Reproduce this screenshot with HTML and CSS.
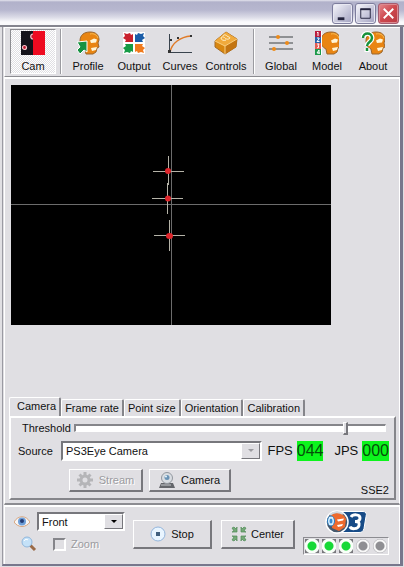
FILE: index.html
```html
<!DOCTYPE html>
<html lang="en">
<head>
<meta charset="utf-8">
<meta name="viewport" content="width=device-width, initial-scale=1">
<title>Head tracker</title>
<link rel="stylesheet" href="styles.css">
</head>
<body>
<svg class="defs" aria-hidden="true">
  <symbol id="head" viewBox="0 0 24 24">
    <path d="M3 10C3 4 7 1 13 1c6 0 9 3 9 8l-1 3 1 4-2 1-1 4-3 2H9l-1-5C4 16 3 13 3 10z" fill="#e98512" stroke="#9b662c"/>
    <path d="M13 9.500l4-2 3 1-1 3-5 .5zM14 17l6-1-1 3-4 1z" fill="#fff6d8"/>
    <path d="M13 3c4-1 7 1 8 4" stroke="#f8bd55" fill="none"/>
  </symbol>
</svg>
<div class="window">
  <header class="titlebar">
    <button class="cap" aria-label="Minimize"><svg viewBox="0 0 20 20"><path d="M5 14h7v3H5z" fill="#24243e"/></svg></button>
    <button class="cap" aria-label="Maximize"><svg viewBox="0 0 20 20"><path d="M5 5.500h10V15H5z" fill="none" stroke="#24243e"/><path d="M4.500 4.500h11v2h-11z" fill="#24243e"/></svg></button>
    <button class="cap close" aria-label="Close"><svg viewBox="0 0 20 20"><path d="M5 5l10 10M15 5L5 15" stroke="#fff" stroke-width="2"/></svg></button>
  </header>
  <div class="client">
    <nav class="toolbar">
      <button class="tool pressed"><svg viewBox="0 0 24 24"><path d="M0 0h12v24H0z" fill="#15131b"/><path d="M12 0h12v24H12z" fill="#ee0a20"/><circle cx="3.500" cy="16.500" r="2" fill="#c01830" stroke="#f7c6cc" stroke-width="1.200"/><path d="M12 3c-3 0-3 5 0 5" fill="#c01830" stroke="#f7c6cc" stroke-width="1.200"/></svg>Cam</button>
      <span class="sep"></span>
      <button class="tool"><svg viewBox="0 0 24 24"><use href="#head" x="1"/><path d="M1 11l10-1v11l-3-2-4 4-3-4 3-3z" fill="#169242" stroke="#fff"/></svg>Profile</button>
      <button class="tool"><svg viewBox="0 0 24 24"><path d="M1 1h22v22H1z" fill="#fff"/><path d="M2 2l3 1 3-1 1 2 2-1v8H3l1-2-3-2 2-2z" fill="#c9202d"/><path d="M22 2l-3 1-3-1-1 2-2-1v8h8l-1-2 3-2-2-2z" fill="#1b5da8"/><path d="M2 22l3-1 3 1 1-2 2 1v-8H3l1 2-3 2 2 2z" fill="#169b45"/><path d="M22 22l-3-1-3 1-1-2-2 1v-8h8l-1 2 3 2-2 2z" fill="#f07a1c"/></svg>Output</button>
      <button class="tool"><svg viewBox="0 0 24 24"><path d="M1.500 3v18.500H24" fill="none" stroke="#39434d"/><path d="M2 21C4 12 12 6 23 5" fill="none" stroke="#e07b28" stroke-width="1.500"/><path d="M0 19h3v3H0zM2 8h2v2H2zM9 6h2v2H9zM22 4h2v2h-2z" fill="#333"/></svg>Curves</button>
      <button class="tool"><svg viewBox="0 0 24 24"><path d="M1 10L12 1l11 7-1 8-11 7L1 16z" fill="#d88710" stroke="#a56b24"/><path d="M1 10l10 5 12-7L12 1z" fill="#f0aa3c"/><path d="M11 15v8l11-7 1-8z" fill="#c37512"/><path d="M1 10l10 5v8M11 15l12-7" fill="none" stroke="#f9cf80"/><path d="M7 7c1-2 3-1 4 0s3 2 5 0M9 5c1-2 3-1 4 0s3 1 3 2M7 7c0 2 3 3 5 2" fill="none" stroke="#fff3d0"/></svg>Controls</button>
      <span class="sep"></span>
      <button class="tool"><svg viewBox="0 0 24 24"><path d="M0 6h24M0 12h24M0 18h24" stroke="#73777a" stroke-width="1.500"/><g fill="#ee8b19"><circle cx="9" cy="6" r="2"/><circle cx="18" cy="12" r="2"/><circle cx="5" cy="18" r="2"/></g></svg>Global</button>
      <button class="tool"><svg viewBox="0 0 24 24"><use href="#head" x="3"/><path d="M0 0h7v24H0z" fill="#fff"/><path d="M0 0h6v6H0z" fill="#b91f3f"/><path d="M0 6h6v6H0z" fill="#2763a9"/><path d="M0 12h6v6H0z" fill="#e35d52"/><path d="M0 18h6v6H0z" fill="#1e9a4b"/><path d="M2 2l1-1v4M2 7h2v1L2 10.500h2.500M2 13h2l-1 2 1 1-2 1M4 23v-4l-2 3h3" fill="none" stroke="#fff"/></svg>Model</button>
      <button class="tool"><svg viewBox="0 0 24 24"><use href="#head" x="2"/><path d="M2 7c0-6 9-6 9 0 0 4-5 4-5 8M6 17v4" fill="none" stroke="#fff" stroke-width="5"/><path d="M2 7c0-6 9-6 9 0 0 4-5 4-5 8M6 17v3" fill="none" stroke="#16913b" stroke-width="2.500"/></svg>About</button>
    </nav>
    <main class="main">
      <div class="view">
        <svg class="video" viewBox="0 0 320 240" role="img" aria-label="Tracked points">
          <path d="M0 0h320v240H0z"/>
          <path d="M160.500 0v240M0 119.500h320" stroke="#6c6c6c"/>
          <path d="M142 86.500h31M157.500 71v29M141 113.500h31M156.500 98v31M143 150.500h31M158.500 135v31" stroke="#b5b3a8"/>
          <g fill="#df252b"><circle cx="157" cy="86" r="3"/><circle cx="157" cy="113.500" r="3"/><ellipse cx="158.500" cy="151" rx="3.500" ry="3"/></g>
        </svg>
      </div>
      <div class="tabs" role="tablist">
        <button class="tab active" role="tab" aria-selected="true">Camera</button>
        <button class="tab" role="tab">Frame rate</button>
        <button class="tab" role="tab">Point size</button>
        <button class="tab" role="tab">Orientation</button>
        <button class="tab" role="tab">Calibration</button>
      </div>
      <section class="page" role="tabpanel">
        <div class="row threshold"><label for="threshold">Threshold</label><input id="threshold" type="range" min="0" max="1000" value="878"></div>
        <div class="row source">
          <label for="source">Source</label>
          <span class="combo off"><select id="source"><option>PS3Eye Camera</option></select></span>
          <span class="meter">FPS <output>044</output></span>
          <span class="meter">JPS <output>000</output></span>
        </div>
        <div class="row actions">
          <button class="btn stream" disabled><svg viewBox="0 0 16 16"><circle cx="8" cy="8" r="4" fill="none" stroke="#b5b5b8" stroke-width="3"/><path d="M8 0v3M8 13v3M0 8h3M13 8h3M2.500 2.500l2 2M11.500 11.500l2 2M2.500 13.500l2-2M11.500 4.500l2-2" stroke="#b5b5b8" stroke-width="3"/></svg>Stream</button>
          <button class="btn camera"><svg viewBox="0 0 16 16"><path d="M2 11h12l2 5H0z" fill="#64666b"/><path d="M2 13h10" stroke="#c8cbd0"/><circle cx="8" cy="6" r="5.500" fill="#d9dde2" stroke="#93989f"/><circle cx="8" cy="5.500" r="2.500" fill="#6a93b5"/><circle cx="7" cy="4.500" r="1" fill="#e7f7ff"/></svg>Camera</button>
          <span class="cpu">SSE2</span>
        </div>
      </section>
    </main>
    <footer class="status">
      <div class="viewopts">
        <svg class="eye" viewBox="0 0 16 16"><path d="M0 8c4-7 12-7 16 0-4 6-12 6-16 0z" fill="#f7f5f5" stroke="#d7a47d"/><circle cx="8" cy="7.500" r="4" fill="#6f9fd8"/><circle cx="8" cy="7" r="2" fill="#233b75"/></svg>
        <span class="combo"><select aria-label="View"><option>Front</option></select></span>
        <svg class="lens" viewBox="0 0 16 16"><path d="M9 9l5 5" stroke="#9a6b48" stroke-width="3"/><circle cx="6" cy="6" r="5" fill="#c4e1f8" stroke="#91b7dc"/><path d="M3 5c1-2 3-2 4-1" stroke="#fff" fill="none"/></svg>
        <label class="zoom"><input type="checkbox" disabled>Zoom</label>
      </div>
      <button class="btn big stop"><svg viewBox="0 0 16 16"><circle cx="8" cy="8" r="7" fill="#e9f5ff" stroke="#93b5dc"/><path d="M6 6h4v4H6z" fill="#42607f"/></svg>Stop</button>
      <button class="btn big center"><svg viewBox="0 0 16 16"><g fill="#75aa79" stroke="#4d8a55" stroke-width=".7"><path id="arrow" d="M1 2l2-1 2 2 1-2v5H1l2-1z"/><use href="#arrow" transform="matrix(-1 0 0 1 16 0)"/><use href="#arrow" transform="matrix(1 0 0 -1 0 16)"/><use href="#arrow" transform="matrix(-1 0 0 -1 16 16)"/></g></svg>Center</button>
      <div class="brand">
        <svg class="logo" viewBox="0 0 42 24" role="img" aria-label="Tracker 3"><path d="M14 1.500h24c3 0 4 2 3 5l-2 12c-1 3-2 4-5 4H13z" fill="#174b87" stroke="#fff"/><circle cx="12" cy="12" r="11" fill="#46596d" stroke="#fff" stroke-width="1.500"/><path d="M6 5c5-4 13-2 15 4l-1 8-6 4-7-3z" fill="#ee6a2d"/><path d="M5 5c3-3 9-4 13-1" stroke="#d4d9de" stroke-width="2" fill="none"/><path d="M12 9.500l7-1-1 2-5 1zM12 15l6-1-1 2-4 1z" fill="#fff"/><ellipse cx="6" cy="11" rx="3.500" ry="5" fill="#d7f0ff" stroke="#2b79bd"/><ellipse cx="6" cy="11" rx="1.500" ry="2.500" fill="#3b8bd0"/><path d="M26 7c2-3 9-3 9 1 0 3-3 3.500-5 3.500 3 0 5 1 4 4-1 4-8 4-9 1" fill="none" stroke="#fff" stroke-width="3"/></svg>
        <div class="leds"><i class="on"></i><i class="on"></i><i class="on"></i><i></i><i></i></div>
      </div>
    </footer>
  </div>
</div>
</body>
</html>
```
FILE: styles.css
```css
* { box-sizing: border-box; }
body {
  margin: 0;
  background: #e0dfe3;
  color: #111;
  font: 11px/14px "Liberation Sans", sans-serif;
}
button, select, input { font: inherit; color: inherit; margin: 0; }
button { padding: 0; }
.defs { position: absolute; width: 0; height: 0; }
.window { min-height: 100vh; display: flex; flex-direction: column; }

.titlebar {
  display: flex;
  justify-content: flex-end;
  gap: 2px;
  height: 27px;
  padding: 3px 5px 0 0;
  border-bottom: 2px solid #85858f;
  background: linear-gradient(#e4e4ee, #b1b1ca 2px, #b7b7cf 10px, #dadae6 17px, #fafafc 22px);
}
.cap {
  width: 21px;
  height: 21px;
  border: 1px solid #7d7d9d;
  border-radius: 3px;
  background: linear-gradient(135deg, #f7f7fc, #c3c3d8 60%, #a2a2c0);
  box-shadow: inset 0 0 0 1px #e8e8f2;
}
.cap svg { display: block; width: 19px; height: 19px; }
.close { background: linear-gradient(135deg, #e58a8e, #cd474d 50%, #b83a42); box-shadow: inset 0 0 0 1px #dc8a90; border-color: #a45c70; }

.client {
  flex: 1;
  display: flex;
  flex-direction: column;
  margin: 0 1px 1px 2px;
  border: solid;
  border-width: 0 3px 2px 1px;
  border-color: #77778c #77778c #77778c #9a9aa2;
  padding-left: 1px;
}
.toolbar {
  display: flex;
  height: 50px;
  padding: 1px 4px 2px 5px;
  border-left: 1px solid #fff;
  border-top: 1px solid #fff;
  border-bottom: 1px solid #8c8c91;
}
.tool {
  flex: 1 1 46px;
  display: flex;
  flex-direction: column;
  align-items: center;
  gap: 4px;
  padding-top: 1px;
  border: 1px solid transparent;
  background: none;
}
.tool svg { width: 24px; height: 24px; flex: none; }
.pressed {
  border-color: #8c8c91 #fff #fff #8c8c91;
  background: repeating-conic-gradient(#fff 0 25%, #e0dfe3 0 50%) 0 0 / 2px 2px;
}
.sep { flex: none; width: 2px; margin: 0 3px 0 4px; border-left: 1px solid #9b9ba0; border-right: 1px solid #fff; }

.main {
  flex: 1;
  display: flex;
  flex-direction: column;
  padding: 6px 3px 3px 4px;
  border: solid;
  border-width: 2px 1px 2px 1px;
  border-color: #fff #fff #8c8c91 #fff;
}
.view { flex: 1; padding: 0 2px; }
.video { display: block; width: 320px; max-width: 100%; }

.tabs { display: flex; align-items: flex-end; }
.tab {
  height: 17px;
  padding: 0 3px;
  border: solid;
  border-width: 1px 2px 0 1px;
  border-color: #fff #85858a #fff #fff;
  border-radius: 2px 2px 0 0;
  background: none;
}
.active { height: 19px; padding: 0 3px 2px 7px; }
.page {
  padding: 2px 5px 1px 7px;
  border: 2px solid;
  border-color: #fff #85858a #85858a #fff;
}
.row { display: flex; align-items: center; }
.threshold { height: 16px; gap: 3px; padding: 0 3px 0 4px; }
.threshold input {
  flex: 1;
  min-width: 0;
  height: 14px;
  appearance: none;
  background: none;
}
.threshold input::-webkit-slider-runnable-track {
  height: 8px;
  border: solid;
  border-width: 2px 1px 1px 2px;
  border-color: #85858a #fff #fff #85858a;
  background: #fff;
}
.threshold input::-webkit-slider-thumb {
  appearance: none;
  width: 5px;
  height: 13px;
  margin-top: -4px;
  border: solid;
  border-width: 1px 2px 2px 1px;
  border-color: #fff #77777c #77777c #fff;
  background: #e0dfe3;
}
.source { height: 22px; margin-top: 4px; }
.source label { width: 43px; }
.combo {
  position: relative;
  display: block;
  height: 19px;
  border: 2px solid;
  border-color: #77777c #fff #fff #77777c;
  background: #fff;
}
.combo select {
  display: block;
  width: 100%;
  height: 100%;
  padding: 0 20px 0 3px;
  border: 0;
  border-radius: 0;
  appearance: none;
  background: none;
}
.combo::before {
  content: "";
  position: absolute;
  inset: 0 0 0 auto;
  width: 17px;
  border: 1px solid;
  border-color: #fff #77777c #77777c #fff;
  background: #e0dfe3;
  pointer-events: none;
}
.combo::after {
  content: "";
  position: absolute;
  right: 6px;
  top: 6px;
  border: solid transparent;
  border-width: 3px 3px 0;
  border-top-color: #000;
  pointer-events: none;
}
.off { flex: 1; height: 20px; }
.off::after { border-top-color: #9b9ba0; }
.meter { display: flex; align-items: center; gap: 4px; margin-left: 5px; font: 13px/20px "Liberation Sans", sans-serif; }
.meter + .meter { margin-left: 11px; }
.meter output { background: #0cf41c; color: #064d0a; font-size: 16px; }

.actions { gap: 6px; height: 28px; margin-top: 7px; padding-left: 51px; align-items: flex-start; }
.btn {
  display: flex;
  align-items: center;
  justify-content: center;
  gap: 6px;
  height: 23px;
  border: solid;
  border-width: 1px 2px 2px 1px;
  border-color: #fff #77777c #77777c #fff;
  background: #e0dfe3;
}
.btn svg { width: 16px; height: 16px; flex: none; }
.stream { width: 74px; color: #9b9ba0; text-shadow: 1px 1px #fff; }
.camera { width: 82px; }
.cpu { margin-left: auto; align-self: flex-end; }

.status {
  display: flex;
  align-items: flex-start;
  padding: 5px 10px 9px 9px;
  border: solid #fff;
  border-width: 2px 1px 0 1px;
}
.viewopts { display: grid; grid-template-columns: 23px 88px; gap: 5px 0; align-items: center; }
.eye { width: 16px; height: 16px; }
.lens { width: 16px; height: 16px; justify-self: end; }
.zoom { display: flex; align-items: center; gap: 5px; padding-left: 16px; color: #9b9ba0; text-shadow: 1px 1px #fff; }
.zoom input {
  appearance: none;
  width: 13px;
  height: 13px;
  border: 2px solid;
  border-color: #85858a #fff #fff #85858a;
}
.big { height: 29px; margin-top: 8px; gap: 5px; }
.stop { width: 79px; margin-left: 8px; }
.center { width: 74px; margin-left: 9px; gap: 4px; }
.brand { display: flex; flex-direction: column; align-items: center; gap: 3px; margin-left: auto; }
.logo { width: 42px; height: 24px; margin-top: -2px; }
.leds {
  display: flex;
  gap: 3px;
  padding: 1px;
  border: 1px solid;
  border-color: #8c8c91 #fff #fff #8c8c91;
}
.leds i {
  width: 14px;
  height: 14px;
  border-radius: 50%;
  background: radial-gradient(circle, #8f8f93 0 4px, #f8f8f8 5px 6px, #a9a9ad 7px);
}
.leds .on {
  border-radius: 0;
  background: radial-gradient(circle, #16d936 0 4px, #f8fff8 5px 7px, #77777c 8px);
}
```
